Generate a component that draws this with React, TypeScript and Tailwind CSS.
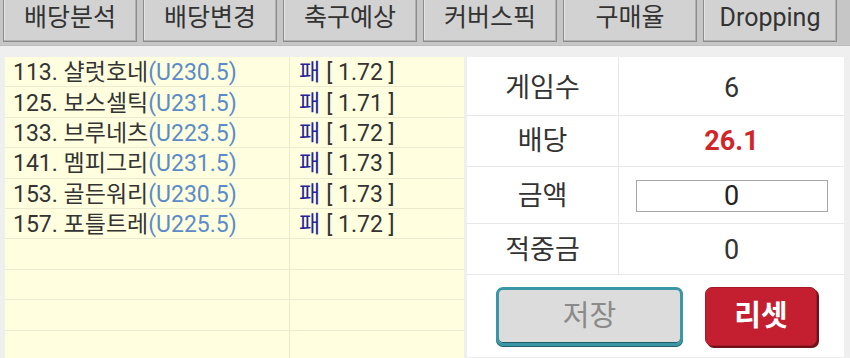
import React from 'react';

const tabs = ['배당분석', '배당변경', '축구예상', '커버스픽', '구매율', 'Dropping'];

const picks = [
  { no: '113', name: '샬럿호네', line: 'U230.5', odds: '1.72' },
  { no: '125', name: '보스셀틱', line: 'U231.5', odds: '1.71' },
  { no: '133', name: '브루네츠', line: 'U223.5', odds: '1.72' },
  { no: '141', name: '멤피그리', line: 'U231.5', odds: '1.73' },
  { no: '153', name: '골든워리', line: 'U230.5', odds: '1.73' },
  { no: '157', name: '포틀트레', line: 'U225.5', odds: '1.72' },
];

const font = { fontFamily: 'Roboto, "Noto Sans CJK KR", sans-serif' };

export default function App() {
  // 빈 줄까지 10줄 채우기
  const rows = [...picks, null, null, null, null];

  return (
    <div className="w-[850px] h-[358px] overflow-hidden bg-[#efefef] text-[#333]" style={font}>
      {/* 상단 탭 */}
      <div className="h-[46px] bg-[#c6c6c6] flex gap-[6px] pl-[3px] border-b border-[#bdbdbd]">
        {tabs.map((t) => (
          <div
            key={t}
            className="w-[134px] h-[42px] bg-[#d2d2d2] border border-t-0 border-[#8c8c8c] shadow-[inset_-1px_-1px_0_#b0b0b0,inset_1px_0_0_#e4e4e4] flex items-center justify-center text-[25px] text-[#333] pb-[5px]"
          >
            {t}
          </div>
        ))}
      </div>

      <div className="flex gap-[3px] pl-[5px] pt-[11px]">
        {/* 선택 경기 목록 */}
        <div className="w-[459px] bg-[#ffffe0]">
          {rows.map((r, i) => (
            <div key={i} className="h-[30.4px] flex border-b border-[#ecebd2]">
              <div className="w-[285px] border-r border-[#ecebd2] flex items-center pl-[8px] pt-[2px] text-[23px] leading-none whitespace-nowrap">
                {r && (
                  <>
                    <span>{r.no}. {r.name}</span>
                    <span className="text-[#5b8cc8]">({r.line})</span>
                  </>
                )}
              </div>
              <div className="flex-1 flex items-center pl-[9px] pt-[2px] text-[23px] leading-none whitespace-nowrap">
                {r && (
                  <>
                    <span className="text-[#23239a]">패</span>
                    <span className="ml-[6px]">[ {r.odds} ]</span>
                  </>
                )}
              </div>
            </div>
          ))}
        </div>

        {/* 요약 */}
        <div className="w-[377px] h-[300px] bg-white">
          <div className="h-[59px] flex border-b border-[#e8e8e8]">
            <div className="w-[152px] border-r border-[#e8e8e8] flex items-center justify-center text-[27px] pt-[5px]">게임수</div>
            <div className="flex-1 flex items-center justify-center text-[27px] pt-[5px]">6</div>
          </div>
          <div className="h-[51px] flex border-b border-[#e8e8e8]">
            <div className="w-[152px] border-r border-[#e8e8e8] flex items-center justify-center text-[27px]">배당</div>
            <div className="flex-1 flex items-center justify-center text-[27px] font-bold text-[#d0262b]">26.1</div>
          </div>
          <div className="h-[57px] flex border-b border-[#e8e8e8]">
            <div className="w-[152px] border-r border-[#e8e8e8] flex items-center justify-center text-[27px] pt-[3px]">금액</div>
            <div className="flex-1 flex items-center justify-center pt-[2px]">
              <div className="w-[192px] h-[32px] border border-[#a6a6a6] flex items-center justify-center text-[27px] text-[#222]">0</div>
            </div>
          </div>
          <div className="h-[51px] flex border-b border-[#e8e8e8]">
            <div className="w-[152px] border-r border-[#e8e8e8] flex items-center justify-center text-[27px] pt-[2px]">적중금</div>
            <div className="flex-1 flex items-center justify-center text-[27px] pt-[2px]">0</div>
          </div>
          <div className="flex pl-[29px] pt-[12px] gap-[22px]">
            <button className="w-[187px] h-[59px] rounded-[7px] bg-[#dcdcdc] border-[3px] border-[#3b97a6] shadow-[inset_0_-1px_0_#1f5f68,0_1px_0_#1f5f68] text-[29px] text-[#8a8a8a]">
              저장
            </button>
            <button className="w-[112px] h-[59px] rounded-[7px] bg-[#c41f30] border border-[#a51a28] shadow-[2px_2px_0_#6e1119] text-[29px] font-bold text-white">
              리셋
            </button>
          </div>
        </div>
      </div>
    </div>
  );
}
